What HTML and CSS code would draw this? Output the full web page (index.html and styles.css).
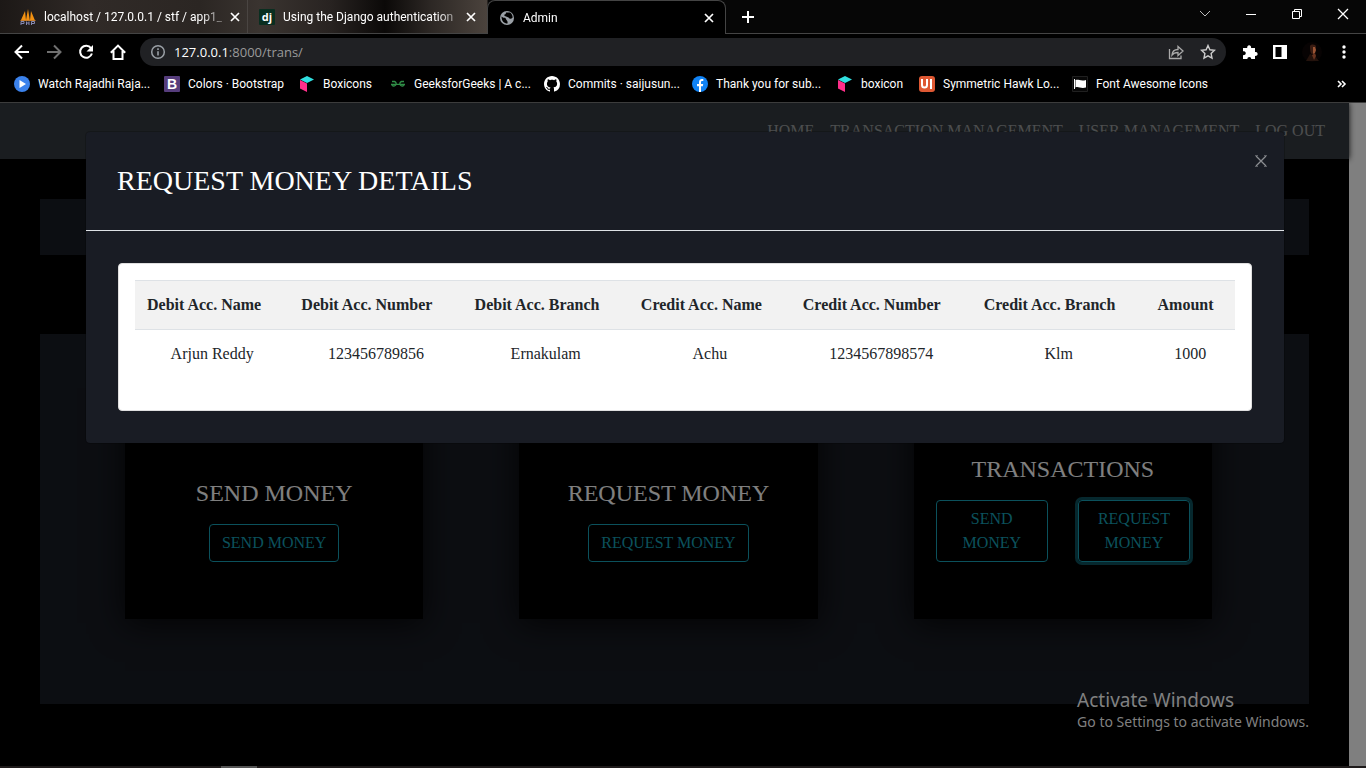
FILE: index.html
```html
<!DOCTYPE html>
<html lang="en">
<head>
<meta charset="utf-8">
<title>Admin</title>
<link rel="stylesheet" href="styles.css">
</head>
<body>
<svg class="defs" aria-hidden="true">
  <symbol id="close" viewBox="0 0 10 10"><path d="M1 1l8 8M9 1l-8 8" fill="none" stroke="currentColor" stroke-width="1.7"/></symbol>
  <symbol id="cube" viewBox="0 0 16 16"><path d="M8 0l7 3.500-7 3.500-7-3.500z" fill="#30dfe0"/><path d="M1 4l7 3.500V16l-7-3.500z" fill="#ff2e8a"/></symbol>
</svg>

<header class="browser">
  <div class="tabs">
    <div class="tab tab-first">
      <svg class="icon" viewBox="0 0 16 16"><path d="M1 11L5 2l1 9zM6 11l2-11 1.800 11zM10 11l1-9 3.800 9z" fill="#f29111"/><path d="M0 11h16l-1 1H1z" fill="#c47a2a"/><path d="M1 16v-3.500h3v2H1M6.500 16v-3.500M6.500 14h2.500M9 16v-3.500M11.500 16v-3.500h3v2h-3" fill="none" stroke="#8587b0"/></svg>
      <span class="tab-title">localhost / 127.0.0.1 / stf / app1_</span>
      <button class="plain" aria-label="Close tab"><svg class="x"><use href="#close"/></svg></button>
    </div>
    <div class="tab">
      <svg class="icon" viewBox="0 0 16 16"><rect width="16" height="16" rx="1" fill="#092e20"/><text x="8" y="12" text-anchor="middle" class="glyph-dj">dj</text></svg>
      <span class="tab-title">Using the Django authentication</span>
      <button class="plain" aria-label="Close tab"><svg class="x"><use href="#close"/></svg></button>
    </div>
    <div class="tab active">
      <svg class="icon" viewBox="0 0 16 16"><circle cx="8" cy="8" r="7" fill="#9aa0a6"/><path d="M2.500 6.500c2 2 4 .500 4.500 2.500s2 1 1.500 4.500C5 13.500 2.500 11 2.500 6.500zM7 2.500h4c1.500 1 2.500 2.500 2.700 5C12 9.500 10.500 9 9.500 7.500 8 6.500 6 6.500 5 5c1-.5 2-1 2-2.500z" fill="#000"/></svg>
      <span class="tab-title">Admin</span>
      <button class="plain" aria-label="Close tab"><svg class="x"><use href="#close"/></svg></button>
    </div>
    <button class="plain new-tab" aria-label="New tab"><svg width="12" height="12" viewBox="0 0 12 12"><path d="M6 0v12M0 6h12" stroke="#fff" stroke-width="2"/></svg></button>
    <div class="window-controls">
      <button class="plain" aria-label="Search tabs"><svg width="12" height="12" viewBox="0 0 12 12"><path d="M1 3l5 5 5-5" fill="none" stroke="#bbb"/></svg></button>
      <button class="plain" aria-label="Minimize"><svg width="12" height="12" viewBox="0 0 12 12"><path d="M1 6.500h10" stroke="#fff"/></svg></button>
      <button class="plain" aria-label="Restore"><svg width="12" height="12" viewBox="0 0 12 12"><path d="M1.500 3.500h7v7h-7zM3.500 3.500v-2h7v7h-2" fill="none" stroke="#fff"/></svg></button>
      <button class="plain" aria-label="Close"><svg width="12" height="12" viewBox="0 0 12 12"><path d="M1 1l10 10M11 1L1 11" stroke="#fff" stroke-width="1.300"/></svg></button>
    </div>
  </div>

  <div class="toolbar">
    <button class="plain" aria-label="Back"><svg class="icon" viewBox="0 0 16 16"><path d="M15 8H2M8 1.500L1.500 8 8 14.500" fill="none" stroke="#fff" stroke-width="2"/></svg></button>
    <button class="plain" aria-label="Forward"><svg class="icon" viewBox="0 0 16 16"><path d="M1 8h13M8 1.500L14.500 8 8 14.500" fill="none" stroke="#707070" stroke-width="2"/></svg></button>
    <button class="plain" aria-label="Reload"><svg class="icon" viewBox="0 0 16 16"><path d="M13 4.200A6 6 0 1 0 13.900 9.500" fill="none" stroke="#fff" stroke-width="2"/><path d="M15 1v6.500H8.500z" fill="#fff"/></svg></button>
    <button class="plain" aria-label="Home"><svg class="icon" viewBox="0 0 16 16"><path d="M.8 8.800L8 1.600l7.200 7.200M3.500 7v8h9V7" fill="none" stroke="#fff" stroke-width="2"/></svg></button>
    <div class="omnibox">
      <svg class="icon" viewBox="0 0 16 16"><circle cx="8" cy="8" r="6.300" fill="none" stroke="#9aa0a6" stroke-width="1.500"/><path d="M8 7.200v4.300M8 4.300v1.700" stroke="#9aa0a6" stroke-width="1.600"/></svg>
      <span class="url">127.0.0.1<span class="path">:8000/trans/</span></span>
      <button class="plain" aria-label="Share"><svg class="icon" viewBox="0 0 16 16"><path d="M1.500 5v9.500h11.500V11.500" fill="none" stroke="#aaa" stroke-width="1.300"/><path d="M4 11c.3-4 2.500-5.500 6-5.500V2.500L15 7l-5 4.500V8.500C7.500 8.500 5.500 9 4 11z" fill="none" stroke="#aaa" stroke-width="1.300"/></svg></button>
      <button class="plain" aria-label="Bookmark this page"><svg class="icon" viewBox="0 0 16 16"><path d="M8 1.500l1.900 4.300 4.600.5-3.400 3.200.9 4.700L8 11.800l-4 2.400.9-4.700L1.500 6.300l4.600-.5z" fill="none" stroke="#ccc" stroke-width="1.400"/></svg></button>
    </div>
    <div class="actions">
      <button class="plain" aria-label="Extensions"><svg class="icon" viewBox="0 0 16 16"><path d="M1 4h4.300a2 2 0 1 1 3.700 0H13v4a2 2 0 1 1 0 3.800V15H9.300a2 2 0 1 0-4 0H1v-4a2 2 0 1 0 0-3.700z" fill="#fff"/></svg></button>
      <button class="plain" aria-label="Side panel"><svg class="icon" viewBox="0 0 16 16"><path d="M1 1h14v14H1zM3.500 3v10H9.500V3z" fill="#fff" fill-rule="evenodd"/></svg></button>
      <button class="plain" aria-label="Profile"><svg width="20" height="20" viewBox="0 0 20 20"><circle cx="10" cy="10" r="10" fill="#070303"/><path d="M8 4c1-2 6-2 6 1l-1 6-3 1c-2-1-2-5-2-8z" fill="#3a1c12"/><path d="M11 5h2l1 3-1 3-2 1z" fill="#9a5434"/><path d="M4 19l4-7 5 2 4 5z" fill="#23120c"/><path d="M10 13l3-2 1 3-2 4z" fill="#693420"/></svg></button>
      <button class="plain" aria-label="Menu"><svg class="icon" viewBox="0 0 16 16"><g fill="#fff"><circle cx="8" cy="3" r="1.700"/><circle cx="8" cy="8" r="1.700"/><circle cx="8" cy="13" r="1.700"/></g></svg></button>
    </div>
  </div>

  <nav class="bookmarks" aria-label="Bookmarks">
    <a href="#"><svg class="icon" viewBox="0 0 16 16"><circle cx="8" cy="8" r="8" fill="#3b82ec"/><path d="M5.500 4l6.500 4-6.500 4z" fill="#fff"/></svg>Watch Rajadhi Raja...</a>
    <a href="#"><svg class="icon" viewBox="0 0 16 16"><rect width="16" height="16" rx="1" fill="#563d7c"/><text x="8" y="13" text-anchor="middle" class="glyph-b">B</text></svg>Colors · Bootstrap</a>
    <a href="#"><svg class="icon"><use href="#cube"/></svg>Boxicons</a>
    <a href="#"><svg class="icon" viewBox="0 0 16 16"><path d="M2 5.500h2.500a2.300 2.300 0 1 1-2.700 3.200M1 8.300h14M14 5.500h-2.500a2.300 2.300 0 1 0 2.700 3.200" fill="none" stroke="#2f8d46" stroke-width="1.300"/></svg>GeeksforGeeks | A c...</a>
    <a href="#"><svg class="icon" viewBox="0 0 16 16"><path fill="#fff" d="M8 0C3.580 0 0 3.580 0 8c0 3.540 2.290 6.530 5.470 7.590.4.070.55-.17.55-.38 0-.19-.01-.82-.01-1.490-2.010.37-2.530-.49-2.690-.94-.09-.23-.48-.94-.82-1.130-.28-.15-.68-.52-.01-.53.63-.01 1.080.58 1.230.82.72 1.210 1.870.87 2.330.66.070-.52.280-.87.510-1.070-1.780-.2-3.640-.89-3.640-3.950 0-.87.310-1.590.820-2.150-.08-.2-.36-1.020.080-2.120 0 0 .670-.21 2.200.820.640-.18 1.320-.27 2-.27s1.360.09 2 .27c1.530-1.040 2.200-.82 2.200-.82.440 1.100.160 1.920.080 2.120.510.560.820 1.270.820 2.150 0 3.070-1.870 3.750-3.650 3.950.290.250.540.730.540 1.480 0 1.070-.01 1.930-.01 2.200 0 .210.150.460.550.380A8 8 0 0 0 16 8c0-4.420-3.580-8-8-8z"/></svg>Commits · saijusun...</a>
    <a href="#"><svg class="icon" viewBox="0 0 16 16"><circle cx="8" cy="8" r="8" fill="#1183f5"/><path d="M7 16v-5.700H5V8h2V6.200C7 4 8.300 3 10 3c.7 0 1.300.1 1.300.1v2h-1C9.300 5.100 9 5.600 9 6.300V8h2.200l-.4 2.300H9V16z" fill="#fff"/></svg>Thank you for sub...</a>
    <a href="#"><svg class="icon"><use href="#cube"/></svg>boxicon</a>
    <a href="#"><svg class="icon" viewBox="0 0 16 16"><rect width="16" height="16" rx="3" fill="#de5833"/><path d="M3 3v6a2.500 2.500 0 0 0 5 0V3M12 3v10" fill="none" stroke="#fff" stroke-width="2"/></svg>Symmetric Hawk Lo...</a>
    <a href="#"><svg class="icon" viewBox="0 0 16 16"><path d="M.5.500h15v15H.5z" fill="#080808" stroke="#202020"/><path d="M2.500 3v10" stroke="#fff"/><path d="M3.500 4c3-1 5 1.500 10.500 0v7.500c-5.500 1.500-7.500-1.500-10.500 0z" fill="#fff"/></svg>Font Awesome Icons</a>
    <button class="plain more" aria-label="More bookmarks"><svg width="10" height="10" viewBox="0 0 10 10"><path d="M1 2l3 3-3 3M5 2l3 3-3 3" fill="none" stroke="#fff" stroke-width="1.600"/></svg></button>
  </nav>
</header>

<div class="viewport">
  <div class="page">
    <nav class="site-nav" aria-label="Site">
      <a href="#">HOME</a>
      <a href="#">TRANSACTION MANAGEMENT</a>
      <a href="#">USER MANAGEMENT</a>
      <a href="#">LOG OUT</a>
    </nav>
    <main>
      <section class="banner"></section>
      <section class="cards">
        <article class="card">
          <h2>SEND MONEY</h2>
          <div class="buttons"><button class="btn">SEND MONEY</button></div>
        </article>
        <article class="card">
          <h2>REQUEST MONEY</h2>
          <div class="buttons"><button class="btn">REQUEST MONEY</button></div>
        </article>
        <article class="card">
          <h2>TRANSACTIONS</h2>
          <div class="buttons split"><button class="btn">SEND MONEY</button><button class="btn focused">REQUEST MONEY</button></div>
        </article>
      </section>
    </main>
  </div>
  <div class="backdrop"></div>
  <div class="modal-layer">
    <div class="modal" role="dialog" aria-labelledby="modal-title">
      <div class="modal-header">
        <h1 id="modal-title">REQUEST MONEY DETAILS</h1>
        <button class="plain modal-close" aria-label="Close"><svg width="12" height="12" viewBox="0 0 12 12"><path d="M1 1l10 10M11 1L1 11" stroke="#8c8e92" stroke-width="1.300" fill="none"/><path d="M0 .5h3M9 .5h3M0 11.500h3M9 11.500h3" stroke="#5c5e64"/></svg></button>
      </div>
      <div class="modal-body">
        <div class="table-card">
          <table>
            <thead>
              <tr><th>Debit Acc. Name</th><th>Debit Acc. Number</th><th>Debit Acc. Branch</th><th>Credit Acc. Name</th><th>Credit Acc. Number</th><th>Credit Acc. Branch</th><th>Amount</th></tr>
            </thead>
            <tbody>
              <tr><td>Arjun Reddy</td><td>123456789856</td><td>Ernakulam</td><td>Achu</td><td>1234567898574</td><td>Klm</td><td>1000</td></tr>
            </tbody>
          </table>
        </div>
      </div>
    </div>
  </div>
  <div class="watermark">
    <p class="watermark-title">Activate Windows</p>
    <p class="watermark-text">Go to Settings to activate Windows.</p>
  </div>
</div>
<div class="taskbar"></div>
</body>
</html>
```
FILE: styles.css
```css
* { box-sizing: border-box; }

body {
  margin: 0;
  height: 100vh;
  display: flex;
  flex-direction: column;
  overflow: hidden;
  background: #000;
  font: 16px/24px "Liberation Serif", "Times New Roman", serif;
}

h1, h2, p { margin: 0; font-weight: 400; }
.defs { position: absolute; width: 0; height: 0; }
.icon { width: 16px; height: 16px; flex: none; display: block; }
.plain { padding: 0; border: 0; background: none; color: #fff; display: flex; }

/* Browser window */
.browser {
  flex: none;
  color: #fff;
  font: 12px/16px Roboto, "Segoe UI", sans-serif;
  border-bottom: 1px solid #3c3c3c;
}

.tabs {
  display: flex;
  height: 34px;
  border-bottom: 1px solid #444;
  background: linear-gradient(90deg, #1c1816 0, #302a27 90px, #2b2623 200px, #3a3430 260px, #282321 330px, #0b0908 385px, #2c2724 430px, #4b433d 487px, #060606 488px);
}

.tab {
  display: flex;
  align-items: center;
  gap: 8px;
  width: 239px;
  padding: 0 11px;
}

.tab-first { width: 248px; padding-left: 20px; border-right: 1px solid #4a4542; }
.tab-title {
  flex: 1;
  white-space: nowrap;
  mask-image: linear-gradient(90deg, #000 88%, rgba(0, 0, 0, .3));
}
.tab.active {
  height: 34px;
  background: #000;
  border: 1px solid #444;
  border-bottom: 0;
  border-radius: 8px 8px 0 0;
}
.x { width: 10px; height: 10px; }
.new-tab { align-items: center; margin-left: 16px; }
.window-controls { display: flex; align-items: center; gap: 34px; margin: 0 17px 6px auto; }

.toolbar { display: flex; align-items: center; gap: 16px; height: 36px; padding: 0 14px; }
.omnibox {
  flex: 1;
  display: flex;
  align-items: center;
  gap: 16px;
  height: 28px;
  margin-left: -2px;
  padding: 0 10px;
  border-radius: 14px;
  background: #202124;
}
.url { flex: 1; margin-left: -8px; font-family: "Open Sans", "Segoe UI", sans-serif; font-size: 13px; }
.path { color: #9a9a9a; }
.actions { display: flex; align-items: center; gap: 14px; width: 110px; }

.bookmarks {
  display: grid;
  grid-template-columns: 150px 135px 91px 154px 148px 145px 82px 153px 1fr 12px;
  align-items: center;
  height: 32px;
  padding: 0 17px 4px 14px;
}
.bookmarks a {
  display: flex;
  align-items: center;
  gap: 8px;
  color: #fff;
  text-decoration: none;
  white-space: nowrap;
}
.glyph-dj { font: 700 11px "Open Sans", sans-serif; fill: #fff; }
.glyph-b { font: 700 14px "Liberation Sans", sans-serif; fill: #fff; }

/* Site */
.viewport { position: relative; flex: 1; overflow: hidden; background: #fff; }
.page { height: 100%; margin-right: 17px; background: #000; }
.site-nav {
  display: flex;
  align-items: center;
  justify-content: flex-end;
  gap: 16px;
  height: 56px;
  padding: 0 24px;
  background: #343a40;
  box-shadow: 0 0 6px rgba(0, 0, 0, .9);
}
.site-nav a { color: rgba(255, 255, 255, .5); text-decoration: none; }

main { padding: 40px; }
.banner { height: 56px; background: #191c24; }
.cards {
  display: grid;
  grid-template-columns: repeat(3, 1fr);
  gap: 96px;
  margin-top: 79px;
  padding: 50px 97px 85px 85px;
  background: #191c24;
}
.card {
  display: flex;
  flex-direction: column;
  justify-content: flex-end;
  align-items: center;
  gap: 16px;
  height: 235px;
  padding: 0 22px 57px;
  background: #000;
  box-shadow: 0 4px 32px rgba(0, 0, 0, .8);
}
.card h2 { color: #fff; font-size: 24px; line-height: 30px; }
.btn {
  padding: 6px 12px;
  border: 1px solid #17a2b8;
  border-radius: 4px;
  background: transparent;
  color: #17a2b8;
  font: inherit;
}
.focused { box-shadow: 0 0 0 3px rgba(23, 162, 184, .5); }
.split { align-self: stretch; display: grid; grid-template-columns: 1fr 1fr; gap: 30px; }

.backdrop { position: absolute; inset: 0; background: rgba(0, 0, 0, .5); }

/* Request details dialog */
.modal-layer { position: absolute; inset: 0; padding: 28px 81px 0 85px; }
.modal {
  border: 1px solid rgba(0, 0, 0, .2);
  border-radius: 5px;
  background: #191c24;
  background-clip: padding-box;
}
.modal-header {
  display: flex;
  justify-content: space-between;
  align-items: flex-start;
  padding: 32px 17px 32px 31px;
  border-bottom: 1px solid #dee2e6;
}
.modal-header h1 { color: #fff; font-size: 28px; line-height: 34px; }
.modal-close { margin-top: -9px; }
.modal-body { padding: 32px; }
.table-card {
  padding: 16px;
  border: 1px solid #dfdfdf;
  border-radius: 4px;
  background: #fff;
}
table { width: 100%; margin-bottom: 16px; border-collapse: collapse; color: #212529; }
th, td { padding: 12px; border-top: 1px solid #dee2e6; }
th { text-align: left; background: #f2f2f2; }
td { text-align: center; }

.watermark {
  position: absolute;
  right: 57px;
  bottom: 34px;
  color: #808080;
  font-family: "Noto Sans", "Segoe UI", sans-serif;
}
.watermark-title { font-size: 19px; line-height: 24px; }
.watermark-text { font-size: 14px; line-height: 20px; }

.taskbar {
  flex: none;
  height: 2px;
  background: linear-gradient(90deg, #1f1b1b 221px, #555 221px, #555 257px, #1f1b1b 257px);
}
```
